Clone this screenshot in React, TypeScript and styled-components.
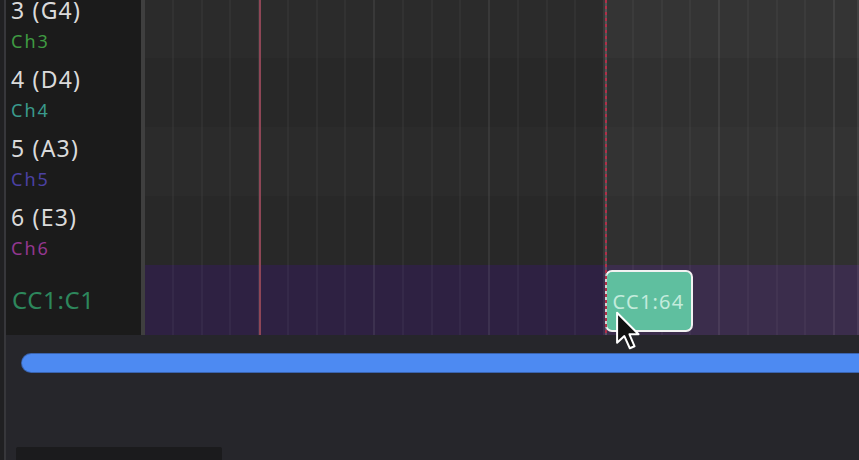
import React from "react";
import styled, { createGlobalStyle } from "styled-components";

const GlobalStyle = createGlobalStyle`
  html, body {
    margin: 0;
    padding: 0;
    background: #26262b;
    overflow: hidden;
  }
  * {
    box-sizing: border-box;
  }
`;

const ROW_H = 69;
const CC_H = 70;
const BEAT = 28.75;
const BAR = BEAT * 4;

type Track = {
  id: string;
  note: string;
  channel: string;
  color: string;
  shade: string;
  shadeLight: string;
};

const tracks: Track[] = [
  { id: "3", note: "G4", channel: "Ch3", color: "#3f9a42", shade: "#2b2b2b", shadeLight: "#343434" },
  { id: "4", note: "D4", channel: "Ch4", color: "#3a9a8c", shade: "#282828", shadeLight: "#303030" },
  { id: "5", note: "A3", channel: "Ch5", color: "#4b41a3", shade: "#2b2b2b", shadeLight: "#333333" },
  { id: "6", note: "E3", channel: "Ch6", color: "#93378f", shade: "#282828", shadeLight: "#303030" },
];

const Screen = styled.div`
  position: relative;
  width: 859px;
  height: 460px;
  display: flex;
  overflow: hidden;
  background: #26262b;
  font-family: "Noto Sans", "Open Sans", sans-serif;
`;

const EdgeRail = styled.div`
  width: 6px;
  flex-shrink: 0;
  background: #202022;
  border-right: 2px solid #37373b;
`;

const Main = styled.div`
  flex: 1;
  display: flex;
  flex-direction: column;
  min-width: 0;
`;

const Editor = styled.div`
  height: 335px;
  display: flex;
  overflow: hidden;
  flex-shrink: 0;
`;

const TrackList = styled.div`
  width: 135px;
  flex-shrink: 0;
  background: #1b1b1b;
`;

// the view is scrolled a little, so the first row is cut at the top
const Rows = styled.div`
  margin-top: -11px;
  display: flex;
  flex-direction: column;
`;

const TrackLabel = styled.div`
  height: ${ROW_H}px;
  padding-left: 5px;
  display: flex;
  flex-direction: column;
`;

const NoteName = styled.div`
  font-size: 23px;
  line-height: 26px;
  margin-top: 8px;
  color: #dadada;
  letter-spacing: 1.2px;
`;

const ChannelName = styled.div<{ $color: string }>`
  font-size: 18px;
  line-height: 20px;
  margin-top: 8px;
  color: ${(p) => p.$color};
  letter-spacing: 2px;
`;

const CCLabel = styled.div`
  height: ${CC_H}px;
  padding-left: 6px;
  display: flex;
  align-items: center;
  font-size: 24px;
  color: #2d875c;
  letter-spacing: 0.6px;
  padding-bottom: 2px;
`;

const Grid = styled.div`
  flex: 1;
  position: relative;
  border-left: 4px solid #3f3f3f;
  overflow: hidden;
`;

const GridRow = styled.div<{ $shade: string; $light: string; $h: number }>`
  height: ${(p) => p.$h}px;
  background: linear-gradient(
    to right,
    ${(p) => p.$shade} 0,
    ${(p) => p.$shade} ${BAR * 4}px,
    ${(p) => p.$light} ${BAR * 4}px
  );
`;

const GridLines = styled.div`
  position: absolute;
  inset: 0;
  pointer-events: none;
  background-image:
    repeating-linear-gradient(
      to right,
      rgba(255, 255, 255, 0.035) 0 2px,
      transparent 2px ${BAR}px
    ),
    repeating-linear-gradient(
      to right,
      rgba(255, 255, 255, 0.035) 0 2px,
      transparent 2px ${BEAT}px
    );
  background-position: -2px 0, -2px 0;
`;

const LoopMarker = styled.div<{ $x: number }>`
  position: absolute;
  top: 0;
  bottom: 0;
  left: ${(p) => p.$x}px;
  width: 2px;
  background: #8e4656;
`;

const Playhead = styled.div<{ $x: number }>`
  position: absolute;
  top: 0;
  bottom: 0;
  left: ${(p) => p.$x}px;
  width: 2px;
  z-index: 2;
  background: repeating-linear-gradient(
    to bottom,
    #b0304a 0 3px,
    rgba(150, 150, 150, 0.35) 3px 6px
  );
`;

const CCNode = styled.div<{ $x: number; $y: number }>`
  position: absolute;
  left: ${(p) => p.$x}px;
  top: ${(p) => p.$y}px;
  width: 88px;
  height: 62px;
  border: 2px solid #f1f1f1;
  border-radius: 7px;
  background: #5fbf9f;
  display: flex;
  align-items: center;
  justify-content: center;
  font-size: 20px;
  color: #c3ebdc;
  letter-spacing: 1.2px;
  padding-right: 1px;
  z-index: 1;
`;

const Cursor = styled.svg<{ $x: number; $y: number }>`
  position: absolute;
  left: ${(p) => p.$x}px;
  top: ${(p) => p.$y}px;
  z-index: 3;
`;

const Footer = styled.div`
  flex: 1;
  display: flex;
  flex-direction: column;
  justify-content: space-between;
  padding-top: 19px;
`;

const ScrollBar = styled.div`
  height: 18px;
  margin-left: 16px;
  margin-right: -20px;
  border-radius: 9px;
  background: #4d8af2;
  box-shadow: 0 0 0 1px #3a64b0;
`;

const BottomStrip = styled.div`
  width: 206px;
  height: 13px;
  margin-left: 10px;
  border-radius: 2px 2px 0 0;
  background: #1b1b1d;
`;

export default function App() {
  return (
    <>
      <GlobalStyle />
      <Screen>
        <EdgeRail />
        <Main>
          <Editor>
            <TrackList>
              <Rows>
                {tracks.map((t) => (
                  <TrackLabel key={t.id}>
                    <NoteName>
                      {t.id} ({t.note})
                    </NoteName>
                    <ChannelName $color={t.color}>{t.channel}</ChannelName>
                  </TrackLabel>
                ))}
                <CCLabel>CC1:C1</CCLabel>
              </Rows>
            </TrackList>
            <Grid>
              <Rows>
                {tracks.map((t) => (
                  <GridRow key={t.id} $h={ROW_H} $shade={t.shade} $light={t.shadeLight} />
                ))}
                <GridRow $h={CC_H} $shade="#2e2142" $light="#3b2d4c" />
              </Rows>
              <GridLines />
              <LoopMarker $x={BAR - 1} />
              <CCNode $x={BAR * 4} $y={270}>
                CC1:64
              </CCNode>
              <Playhead $x={BAR * 4} />
            </Grid>
          </Editor>
          <Footer>
            <ScrollBar />
            <BottomStrip />
          </Footer>
        </Main>
        <Cursor $x={615} $y={311} width="26" height="40" viewBox="0 0 14 22">
          <path
            d="M1 1 L1 17.5 L5 13.8 L8 20.5 L10.6 19.4 L7.8 12.8 L12.8 12.8 Z"
            fill="#111"
            stroke="#fff"
            strokeWidth="1.1"
            strokeLinejoin="round"
          />
        </Cursor>
      </Screen>
    </>
  );
}
